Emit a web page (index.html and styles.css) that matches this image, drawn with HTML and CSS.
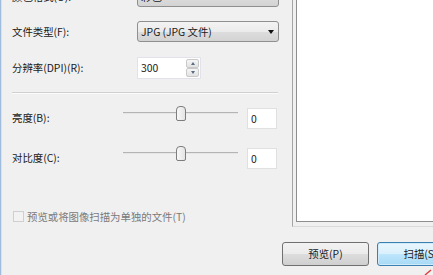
FILE: index.html
```html
<!DOCTYPE html>
<html lang="zh-CN">
<head>
<meta charset="utf-8">
<title>扫描设置</title>
<link rel="stylesheet" href="styles.css">
</head>
<body>
<div class="window">
  <div class="main">
    <div class="form">
      <div class="row row-first">
        <span class="label">颜色格式(O):</span>
        <div class="combo"><span class="combo-text">彩色</span><span class="arrow"></span></div>
      </div>
      <div class="row row-type">
        <span class="label">文件类型(F):</span>
        <div class="combo"><span class="combo-text">JPG (JPG 文件)</span><span class="arrow"></span></div>
      </div>
      <div class="row row-dpi">
        <span class="label">分辨率(DPI)(R):</span>
        <div class="spin">
          <span class="spin-text">300</span>
          <div class="spin-btns">
            <span class="spin-btn"><span class="tri-up"></span></span>
            <span class="spin-btn"><span class="tri-down"></span></span>
          </div>
        </div>
      </div>
      <div class="sep"></div>
      <div class="row slider-row slider-first">
        <span class="label label-slider">亮度(B):</span>
        <div class="slider"><div class="track"></div><div class="thumb"></div></div>
        <div class="num">0</div>
      </div>
      <div class="row slider-row slider-second">
        <span class="label label-slider">对比度(C):</span>
        <div class="slider"><div class="track"></div><div class="thumb"></div></div>
        <div class="num">0</div>
      </div>
      <div class="check">
        <span class="check-box"></span>
        <span class="check-text">预览或将图像扫描为单独的文件(T)</span>
      </div>
    </div>
    <div class="preview-frame">
      <div class="preview"></div>
    </div>
  </div>
  <div class="buttons">
    <div class="btn">预览(P)</div>
    <div class="btn btn-default">扫描(S)</div>
  </div>
  <svg class="mark" width="8" height="6" viewBox="0 0 8 6"><path d="M1 6 L7 1" stroke="#e23a3a" stroke-width="1.4" fill="none"/></svg>
</div>
</body>
</html>
```

FILE: styles.css
```css
* { box-sizing: border-box; }

html, body {
  margin: 0;
  padding: 0;
}

body {
  width: 433px;
  height: 275px;
  overflow: hidden;
  background: #f0f0f0;
  font-family: "Noto Sans CJK SC", "Noto Sans", sans-serif;
  font-size: 10.4px;
  color: #1a1a1a;
}

.window {
  position: relative;
  width: 433px;
  height: 275px;
  border-left: 1px solid #9fbcdc;
  box-shadow: inset 1px 0 0 #d6e4f2;
  overflow: hidden;
}

.main {
  display: flex;
  height: 227px;
}

.form {
  flex: 0 0 291px;
  margin-top: -14px;
  padding-left: 11px;
}

.row {
  display: flex;
  align-items: center;
}

.label {
  flex: 0 0 125px;
  line-height: 14px;
}

.row-first { height: 21px; }
.row-type { height: 21px; margin-top: 14px; }
.row-dpi { height: 22px; margin-top: 15px; }

.combo {
  position: relative;
  width: 142px;
  height: 21px;
  border: 1px solid #8e8f8f;
  border-radius: 3px;
  background: linear-gradient(#f3f3f3 0%, #ebebeb 50%, #dddddd 51%, #d3d3d3 100%);
  display: flex;
  align-items: center;
  padding-left: 3px;
}

.combo-text {
  line-height: 14px;
}

.arrow {
  position: absolute;
  right: 4px;
  top: 8px;
  width: 0;
  height: 0;
  border-left: 3.5px solid transparent;
  border-right: 3.5px solid transparent;
  border-top: 4px solid #111;
}

.spin {
  display: flex;
  width: 64px;
  height: 22px;
}

.spin-text {
  flex: 0 0 49px;
  height: 22px;
  background: #fff;
  border: 1px solid #e2e3ea;
  border-right: none;
  padding-left: 3px;
  line-height: 20px;
}

.spin-btns {
  flex: 0 0 15px;
  display: flex;
  flex-direction: column;
  background: #fff;
  border: 1px solid #e2e3ea;
  border-left: none;
  padding: 1px 1px 1px 0;
}

.spin-btn {
  flex: 1;
  display: flex;
  align-items: center;
  justify-content: center;
  border: 1px solid #c9c9c9;
  border-radius: 2px;
  background: linear-gradient(#f6f6f6, #e2e2e2);
}

.tri-up, .tri-down {
  width: 0;
  height: 0;
  border-left: 2.5px solid transparent;
  border-right: 2.5px solid transparent;
}
.tri-up { border-bottom: 3px solid #5a6b80; }
.tri-down { border-top: 3px solid #5a6b80; }

.sep {
  width: 266px;
  margin-top: 13px;
  border-top: 1px solid #d0d0d0;
  border-bottom: 1px solid #fbfbfb;
}

.slider-row {
  height: 21px;
  align-items: center;
}
.slider-first { margin-top: 14px; }
.slider-second { margin-top: 19px; }

.label-slider {
  flex: 0 0 111px;
  margin-top: -1px;
}

.slider {
  position: relative;
  flex: 0 0 115px;
  height: 16px;
  align-self: flex-start;
  margin-top: -2px;
}

.track {
  position: absolute;
  left: 0;
  right: 0;
  top: 6px;
  height: 2px;
  border-top: 1px solid #b4b4b4;
  border-bottom: 1px solid #e6e6e6;
}

.thumb {
  position: absolute;
  left: 53px;
  top: 0;
  width: 10px;
  height: 15px;
  border: 1px solid #7d7d7d;
  border-radius: 4px 4px 2px 2px;
  background: linear-gradient(90deg, #f7f7f7, #e4e4e4);
}

.num {
  margin-left: 9px;
  width: 30px;
  height: 21px;
  background: #fff;
  border: 1px solid #e0e0e0;
  padding-left: 3px;
  line-height: 19px;
}

.check {
  display: flex;
  align-items: center;
  margin-top: 42px;
  margin-left: 1px;
  height: 11px;
}

.check-box {
  width: 11px;
  height: 11px;
  border: 1px solid #cfcfcf;
  background: #f2f2f2;
  margin-right: 3px;
}

.check-text {
  color: #7a7a7a;
  line-height: 12px;
}

.preview-frame {
  flex: 1;
  margin-top: -10px;
  border-left: 1px solid #a5a5a5;
  border-bottom: 1px solid #dadada;
  padding: 0 0 4px 3px;
  display: flex;
}

.preview {
  flex: 1;
  background: #fff;
  border-left: 1px solid #8e8e8e;
  border-bottom: 1px solid #8e8e8e;
}

.buttons {
  display: flex;
  gap: 8px;
  margin-top: 15px;
  padding-left: 281px;
}

.btn {
  flex: 0 0 87px;
  height: 24px;
  border: 1px solid #707070;
  border-radius: 3px;
  background: linear-gradient(#f2f2f2 0%, #ebebeb 50%, #dddddd 51%, #cfcfcf 100%);
  display: flex;
  align-items: center;
  justify-content: center;
  line-height: 14px;
}

.btn-default {
  border-color: #3c7fb1;
  background: linear-gradient(#eaf6fd 0%, #d9f0fc 50%, #bee6fd 51%, #a7d9f5 100%);
  box-shadow: inset 0 0 0 1px #cfeafa;
}

.mark {
  position: absolute;
  right: 1px;
  bottom: 0;
}
```
